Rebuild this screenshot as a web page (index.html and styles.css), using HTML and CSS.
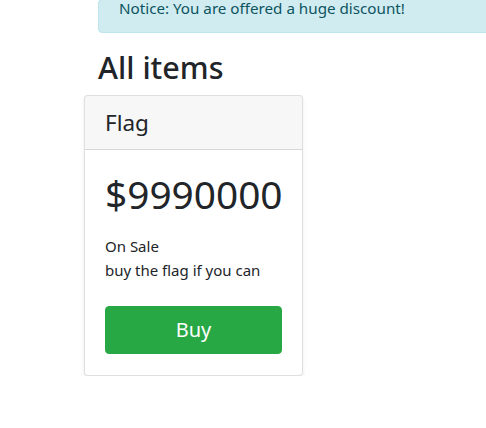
FILE: index.html
```html
<!DOCTYPE html>
<html lang="en">
<head>
<meta charset="utf-8">
<title>All items</title>
<link rel="stylesheet" href="styles.css">
</head>
<body>
<main class="container">
  <div class="alert">Notice: You are offered a huge discount!</div>
  <h2 class="page-title">All items</h2>
  <div class="card">
    <div class="card-header">Flag</div>
    <div class="card-body">
      <h1 class="price">$9990000</h1>
      <p class="card-text">On Sale<br>buy the flag if you can</p>
      <button class="btn-buy" type="button">Buy</button>
    </div>
  </div>
</main>
</body>
</html>
```
FILE: styles.css
```css
* { box-sizing: border-box; }
html, body { margin: 0; padding: 0; background: #fff; }
body {
  font-family: "Noto Sans", "Open Sans", sans-serif;
  font-size: 16px;
  line-height: 1.5;
  color: #212529;
  overflow: hidden;
}
.container {
  padding-left: 98px;
  margin-top: -1px;
}
.alert {
  background: #d1ecf1;
  border: 1px solid #bee5eb;
  border-radius: 4px;
  color: #0c5460;
  padding: 0 20px 16px 20px;
  margin-bottom: 16px;
  font-size: 15.2px;
  line-height: 16px;
  margin-right: -20px;
}
.page-title {
  font-size: 30.5px;
  font-weight: 500;
  line-height: 1.2;
  margin: 0 0 8px 0;
  height: 38px;
}
.card {
  width: 219px;
  margin-left: -14px;
  border: 1px solid rgba(0,0,0,.125);
  border-radius: 4px;
  box-shadow: 0 2px 4px rgba(0,0,0,.075);
  background: #fff;
  overflow: hidden;
}
.card-header {
  background: rgba(0,0,0,.03);
  border-bottom: 1px solid rgba(0,0,0,.125);
  padding: 12px 20px;
  font-size: 22.5px;
  line-height: 29px;
}
.card-body {
  padding: 20px 20px 21px 20px;
}
.price {
  font-size: 38.8px;
  font-weight: 400;
  line-height: 48px;
  margin: 0 0 16px 0;
}
.card-text {
  margin: 0 0 24px 0;
  font-size: 15px;
  line-height: 24px;
}
.btn-buy {
  display: block;
  width: 100%;
  height: 48px;
  border: 1px solid #28a745;
  background: #28a745;
  color: #fff;
  border-radius: 4px;
  font-family: inherit;
  font-size: 20px;
  line-height: 30px;
  padding: 8px 16px;
}
```
